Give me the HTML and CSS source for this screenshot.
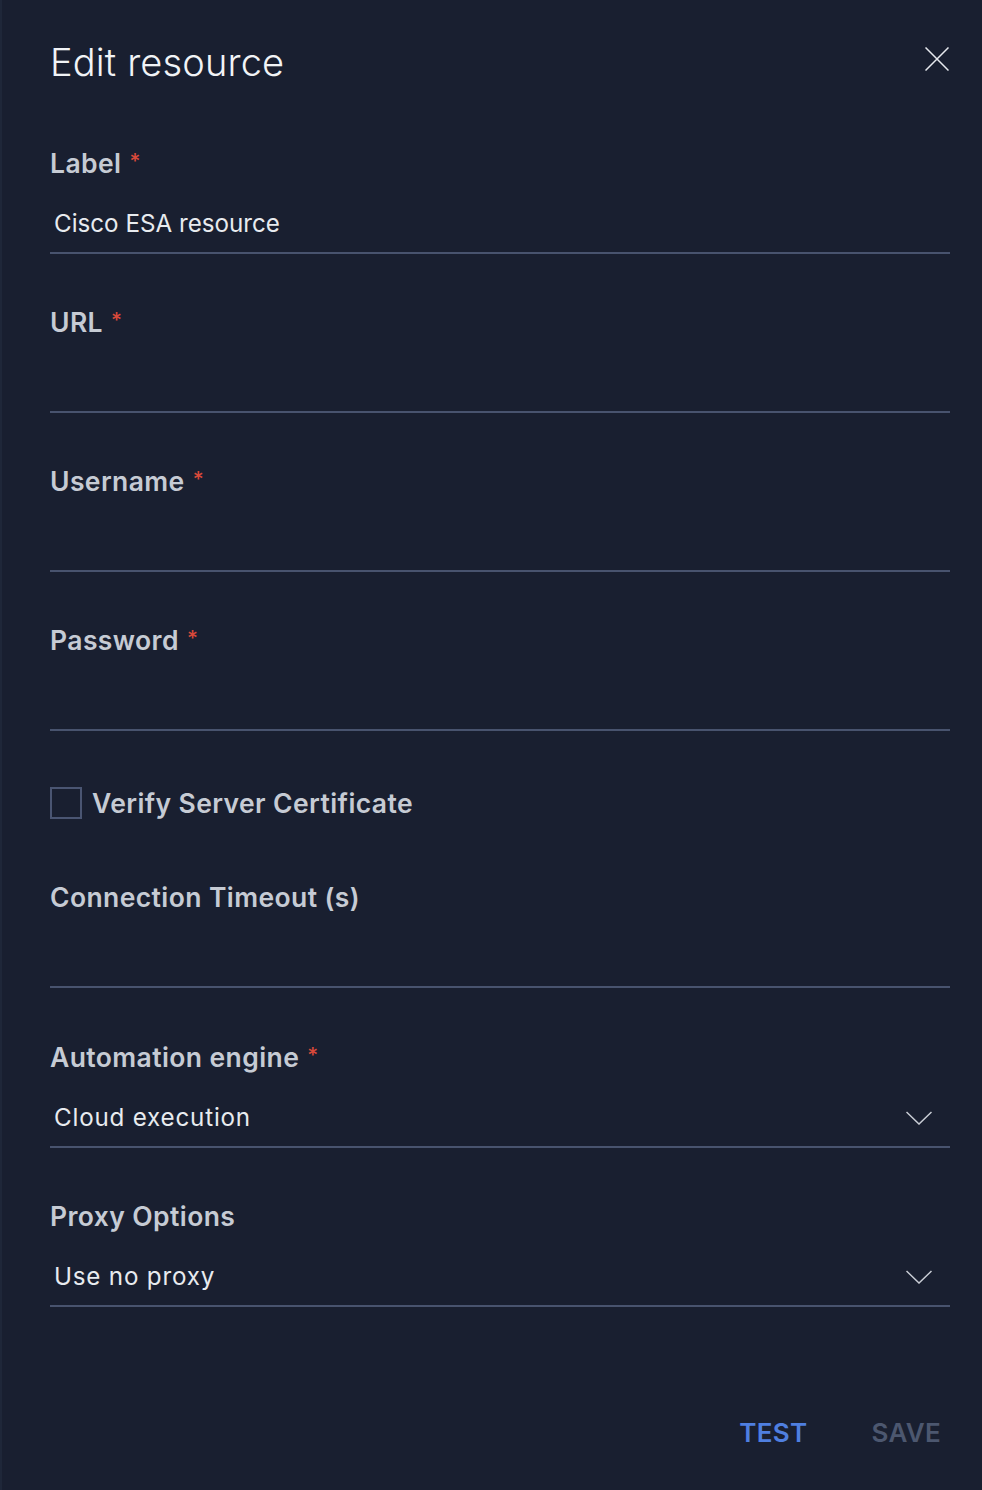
FILE: index.html
```html
<!DOCTYPE html>
<html>
<head>
<meta charset="utf-8">
<link rel="stylesheet" href="styles.css">
</head>
<body>
<div class="panel">
  <header class="head">
    <h1 class="title">Edit resource</h1>
    <button class="close" aria-label="Close">
      <svg width="24" height="24" viewBox="0 0 24 24"><path d="M0.5 0.5 L23.5 23.5 M23.5 0.5 L0.5 23.5" stroke="#e6e9ee" stroke-width="1.5" fill="none"/></svg>
    </button>
  </header>

  <div class="field">
    <div class="label">Label <span class="req">*</span></div>
    <div class="input">Cisco ESA resource</div>
  </div>
  <div class="field">
    <div class="label">URL <span class="req">*</span></div>
    <div class="input"></div>
  </div>
  <div class="field">
    <div class="label">Username <span class="req">*</span></div>
    <div class="input"></div>
  </div>
  <div class="field">
    <div class="label">Password <span class="req">*</span></div>
    <div class="input"></div>
  </div>

  <label class="check">
    <span class="box"></span>
    <span class="check-text">Verify Server Certificate</span>
  </label>

  <div class="field f-timeout">
    <div class="label">Connection Timeout (s)</div>
    <div class="input"></div>
  </div>
  <div class="field">
    <div class="label">Automation engine <span class="req">*</span></div>
    <div class="input select"><span>Cloud execution</span>
      <svg class="chev" width="26" height="14" viewBox="0 0 26 14"><path d="M0.5 1 L13 13 L25.5 1" stroke="#c9cdd5" stroke-width="1.5" fill="none"/></svg>
    </div>
  </div>
  <div class="field f-last">
    <div class="label">Proxy Options</div>
    <div class="input select"><span>Use no proxy</span>
      <svg class="chev" width="26" height="14" viewBox="0 0 26 14"><path d="M0.5 1 L13 13 L25.5 1" stroke="#c9cdd5" stroke-width="1.5" fill="none"/></svg>
    </div>
  </div>

  <footer class="actions">
    <button class="btn btn-test">TEST</button>
    <button class="btn btn-save">SAVE</button>
  </footer>
</div>
</body>
</html>
```

FILE: styles.css
```css
html, body {
  margin: 0;
  padding: 0;
  background: #191f30;
}
body {
  font-family: Inter, "Open Sans", "Liberation Sans", sans-serif;
  width: 982px;
  height: 1490px;
  overflow: hidden;
}
.panel {
  box-sizing: border-box;
  height: 1490px;
  border-left: 2px solid #1f2739;
  padding: 40px 32px 0 48px;
  display: flex;
  flex-direction: column;
}
.head {
  display: flex;
  justify-content: space-between;
  align-items: center;
  height: 44px;
  margin-bottom: 62px;
}
.title {
  margin: 0;
  font-size: 38px;
  font-weight: 300;
  line-height: 44px;
  color: #f1f3f6;
  letter-spacing: 0.15px;
}
.close {
  background: none;
  border: 0;
  padding: 0;
  margin-right: 1px;
  margin-top: -6px;
  width: 24px;
  height: 24px;
  display: flex;
}
.field {
  display: flex;
  flex-direction: column;
  margin-bottom: 51px;
}
.label {
  font-size: 26.5px;
  line-height: 34px;
  height: 34px;
  font-weight: 600;
  color: #c6cbd4;
  letter-spacing: 0.4px;
}
.req {
  position: relative;
  top: -4px;
  color: #d9493a;
  font-size: 21px;
  font-weight: 500;
  margin-left: 1px;
}
.input {
  box-sizing: border-box;
  height: 74px;
  padding: 28px 4px 12px 4px;
  line-height: 32px;
  font-size: 24.2px;
  font-weight: 400;
  color: #e8ebef;
  border-bottom: 2px solid #48536e;
  letter-spacing: 0;
}
.select {
  display: flex;
  justify-content: space-between;
  align-items: center;
  padding-right: 18px;
  letter-spacing: 0.8px;
}
.chev {
  margin-top: -1px;
}
.check {
  display: flex;
  align-items: center;
  height: 32px;
  margin-top: 5px;
  margin-bottom: 61px;
}
.box {
  box-sizing: border-box;
  width: 32px;
  height: 32px;
  border: 2px solid #4a5572;
  margin-right: 10px;
}
.check-text {
  font-size: 26.5px;
  font-weight: 600;
  color: #c6cbd4;
  letter-spacing: 0.4px;
}
.f-timeout { margin-bottom: 52px; }
.f-last { margin-bottom: 0; }
.actions {
  display: flex;
  justify-content: flex-end;
  gap: 64px;
  margin-top: 110px;
  padding-right: 9px;
}
.btn {
  background: none;
  border: 0;
  padding: 0;
  font-family: inherit;
  font-size: 26px;
  font-weight: 600;
  line-height: 32px;
  letter-spacing: 0.3px;
}
.btn-test { color: #4f7fe0; }
.btn-save { color: #4c576f; }
```
